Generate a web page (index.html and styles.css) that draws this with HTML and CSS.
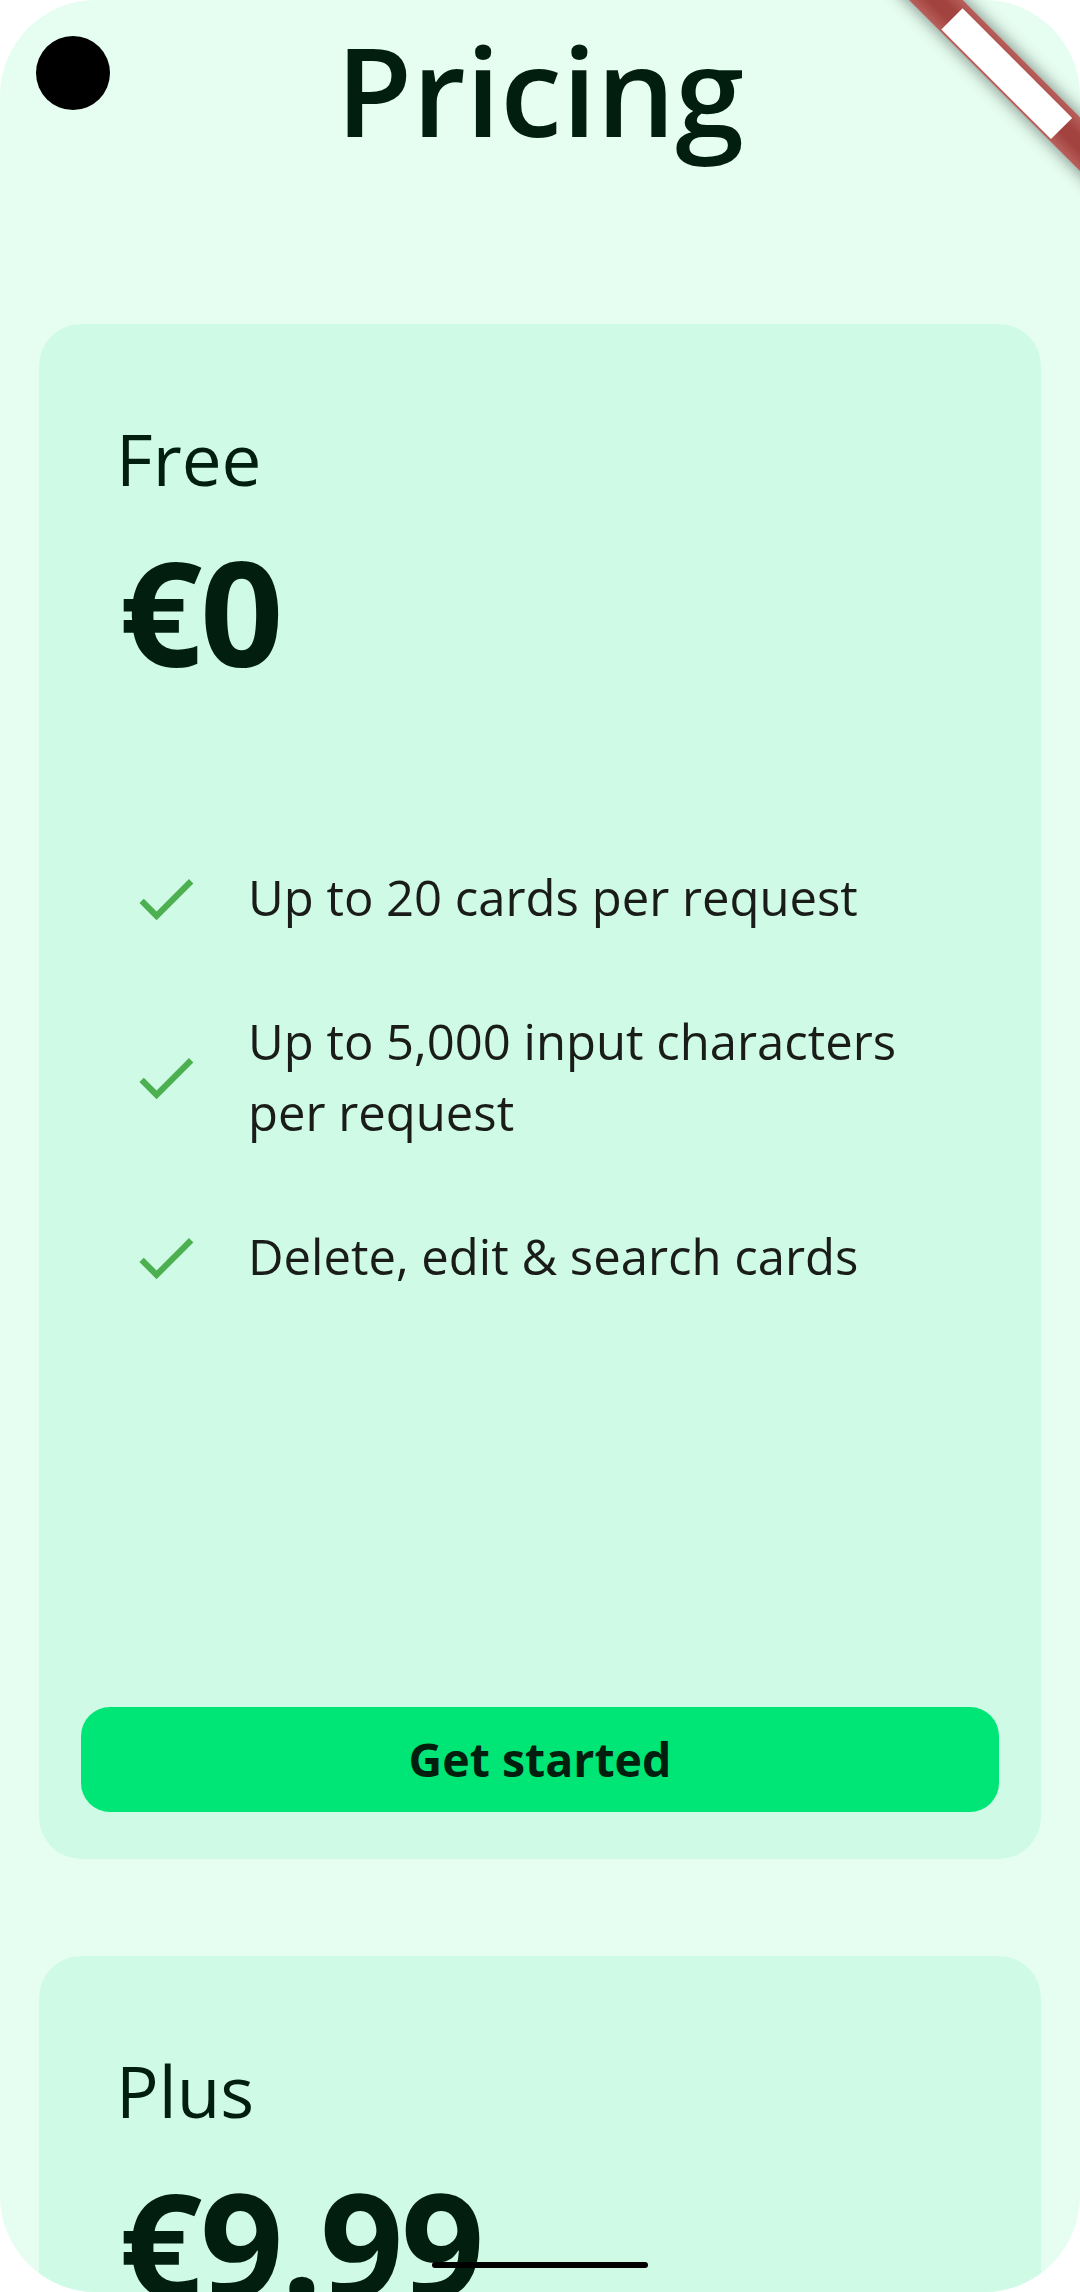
FILE: index.html
```html
<!DOCTYPE html>
<html lang="en">
<head>
<meta charset="utf-8">
<title>Pricing</title>
<link rel="stylesheet" href="styles.css">
</head>
<body>
<div class="screen">
  <header class="app-bar">
    <h1 class="app-title">Pricing</h1>
  </header>

  <main class="plans">
    <section class="plan">
      <div class="plan-head">
        <h2 class="plan-name">Free</h2>
        <div class="plan-price">€0</div>
      </div>
      <ul class="features">
        <li class="feature">
          <svg class="check" viewBox="0 0 24 24"><path d="M9 16.17L4.83 12l-1.42 1.41L9 19 21 7l-1.41-1.41z"/></svg>
          <span class="feature-text">Up to 20 cards per request</span>
        </li>
        <li class="feature">
          <svg class="check" viewBox="0 0 24 24"><path d="M9 16.17L4.83 12l-1.42 1.41L9 19 21 7l-1.41-1.41z"/></svg>
          <span class="feature-text">Up to 5,000 input characters per request</span>
        </li>
        <li class="feature">
          <svg class="check" viewBox="0 0 24 24"><path d="M9 16.17L4.83 12l-1.42 1.41L9 19 21 7l-1.41-1.41z"/></svg>
          <span class="feature-text">Delete, edit &amp; search cards</span>
        </li>
      </ul>
      <button class="cta" type="button">Get started</button>
    </section>

    <section class="plan">
      <div class="plan-head">
        <h2 class="plan-name">Plus</h2>
        <div class="plan-price">€9.99</div>
      </div>
      <ul class="features">
        <li class="feature">
          <svg class="check" viewBox="0 0 24 24"><path d="M9 16.17L4.83 12l-1.42 1.41L9 19 21 7l-1.41-1.41z"/></svg>
          <span class="feature-text">Up to 50 cards per request</span>
        </li>
        <li class="feature">
          <svg class="check" viewBox="0 0 24 24"><path d="M9 16.17L4.83 12l-1.42 1.41L9 19 21 7l-1.41-1.41z"/></svg>
          <span class="feature-text">Up to 20,000 input characters per request</span>
        </li>
      </ul>
      <button class="cta" type="button">Get started</button>
    </section>
  </main>

  <div class="camera"></div>
  <div class="debug-banner"><div class="debug-label"></div></div>
  <div class="home-indicator"></div>
</div>
</body>
</html>
```

FILE: styles.css
```css
* {
  box-sizing: border-box;
}

html, body {
  margin: 0;
  padding: 0;
  background: #ffffff;
}

body {
  font-family: "Open Sans", "Noto Sans", sans-serif;
}

.screen {
  position: relative;
  width: 1080px;
  height: 2292px;
  border-radius: 96px;
  overflow: hidden;
  background: #e6fef1;
}

.app-bar {
  padding-top: 14px;
  display: flex;
  justify-content: center;
}

.app-title {
  margin: 0;
  font-size: 124px;
  line-height: 150px;
  font-weight: 600;
  color: #021e0e;
}

.plans {
  display: flex;
  flex-direction: column;
  gap: 97px;
  padding: 160px 39px 0;
}

.plan {
  display: flex;
  flex-direction: column;
  background: #cffbe6;
  border-radius: 42px;
  padding: 89.5px 42px 47px;
}

.plan-head {
  display: flex;
  flex-direction: column;
  gap: 17px;
  padding-left: 35px;
}

.plan-name {
  margin: 0;
  font-size: 71px;
  line-height: 90px;
  font-weight: 400;
  color: #021e0e;
}

.plan-price {
  margin-left: 3px;
  font-size: 146px;
  line-height: 180px;
  font-weight: 700;
  letter-spacing: -2.5px;
  color: #021e0e;
}

.features {
  list-style: none;
  margin: 161px 0 0;
  padding: 0 42px 0 47.5px;
  display: flex;
  flex-direction: column;
  gap: 72px;
}

.feature {
  display: flex;
  align-items: center;
  gap: 46px;
  min-height: 73.5px;
}

.check {
  flex: 0 0 73.5px;
  width: 73.5px;
  height: 73.5px;
  fill: #4caf50;
}

.feature-text {
  font-size: 49px;
  line-height: 71px;
  color: #1a1c1a;
  position: relative;
  top: -1px;
}

.cta {
  margin-top: 412.75px;
  height: 105px;
  border: 0;
  border-radius: 29px;
  background: #00e676;
  color: #021e0e;
  font-family: "Open Sans", "Noto Sans", sans-serif;
  font-size: 46.5px;
  font-weight: 700;
  line-height: 105px;
  padding: 0;
}

.camera {
  position: absolute;
  left: 36px;
  top: 36px;
  width: 74px;
  height: 74px;
  border-radius: 50%;
  background: #000000;
}

.debug-banner {
  position: absolute;
  left: 858.25px;
  top: 53px;
  width: 300px;
  height: 37.5px;
  transform: rotate(45deg);
  background: linear-gradient(to bottom, #b9605c 0%, #a3433f 35%, #a3433f 65%, #b9605c 100%);
  box-shadow: 0 0 16px 2px rgba(0, 0, 0, 0.42);
}

.debug-label {
  position: absolute;
  left: 72.5px;
  top: 5.5px;
  width: 155px;
  height: 30.5px;
  background: #ffffff;
}

.home-indicator {
  position: absolute;
  left: 432px;
  top: 2262px;
  width: 216px;
  height: 6px;
  border-radius: 3px;
  background: #000000;
}
```
